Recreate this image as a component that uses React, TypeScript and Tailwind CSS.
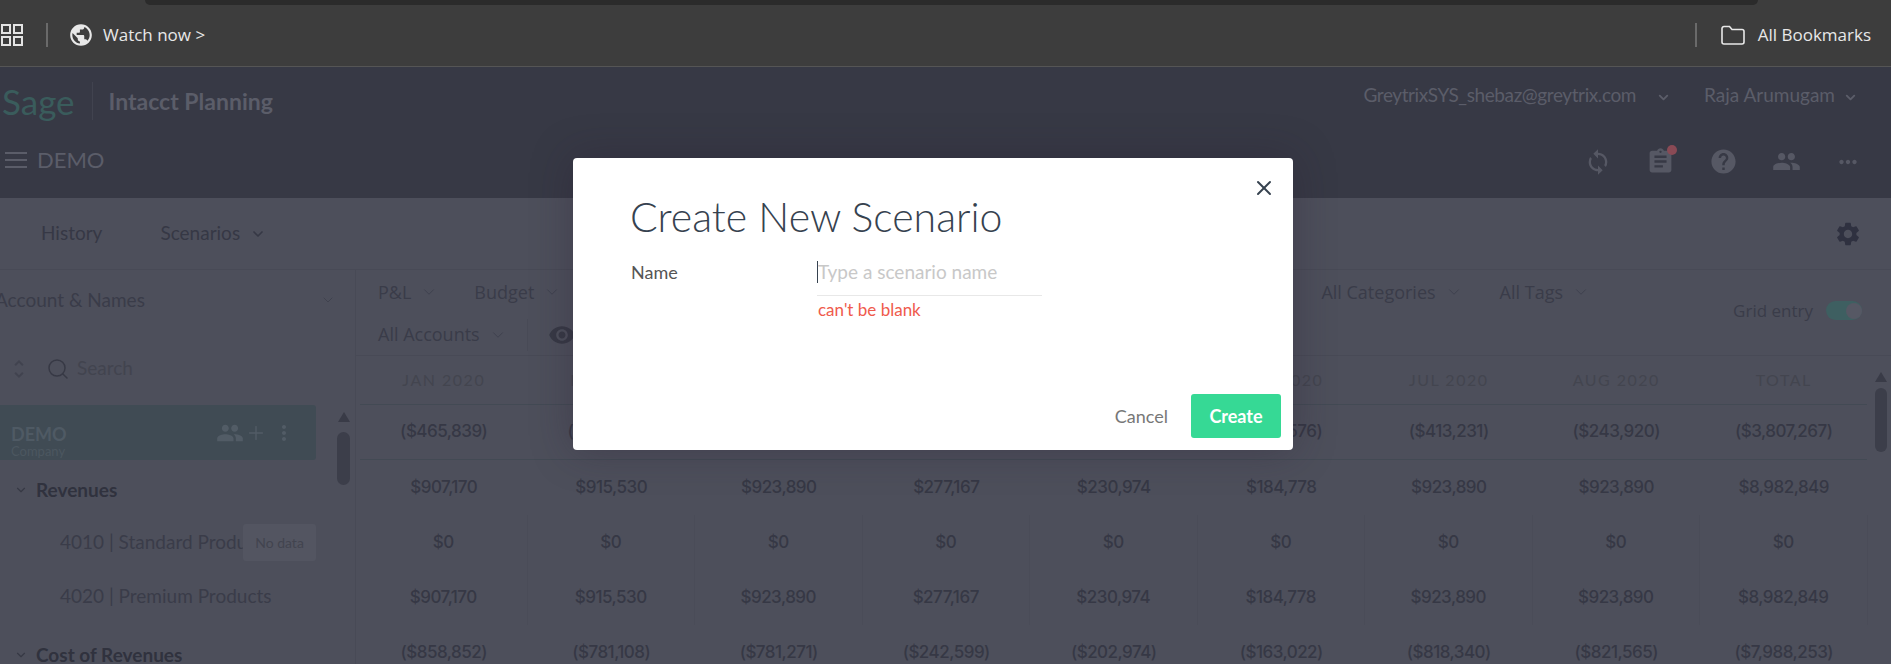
import { ChevronDown, Plus, Search, X } from "lucide-react";
import {
  MdAssignment,
  MdHelp,
  MdMoreHoriz,
  MdMoreVert,
  MdPeople,
  MdPublic,
  MdSettings,
  MdSync,
  MdUnfoldMore,
  MdVisibility,
} from "react-icons/md";

const months = ["JAN 2020", "FEB 2020", "MAR 2020", "APR 2020", "MAY 2020", "JUN 2020", "JUL 2020", "AUG 2020", "TOTAL"];

const revenue = ["$907,170", "$915,530", "$923,890", "$277,167", "$230,974", "$184,778", "$923,890", "$923,890", "$8,982,849"];

const rows = [
  { lined: true, cells: ["($465,839)", "($465,839)", "($465,839)", "($139,576)", "($139,576)", "($139,576)", "($413,231)", "($243,920)", "($3,807,267)"] },
  { lined: false, cells: revenue },
  { lined: false, grid: true, cells: ["$0", "$0", "$0", "$0", "$0", "$0", "$0", "$0", "$0"] },
  { lined: false, grid: true, cells: revenue },
  { lined: false, cells: ["($858,852)", "($781,108)", "($781,271)", "($242,599)", "($202,974)", "($163,022)", "($818,340)", "($821,565)", "($7,988,253)"] },
];

const Filter = ({ label }: { label: string }) => (
  <div className="flex items-center gap-[9px] text-[18px] text-[#3a3c49]">
    {label}
    <ChevronDown size={18} strokeWidth={1} className="text-[#3a3c49]" />
  </div>
);

const ChromeBar = () => (
  <div className="relative h-[67px] shrink-0 border-b border-[#555555] bg-[#3d3d3d] font-['Open_Sans',sans-serif] text-[#e8e8e8]">
    <div className="absolute left-[145px] top-0 h-[5px] w-[1613px] rounded-b-[10px] bg-[#2b2b2b]" />
    <div className="flex h-full items-center pt-[4px]">
      <svg width="22" height="22" viewBox="0 0 22 22" fill="none" stroke="#e4e4e4" strokeWidth="2" className="ml-px">
        <rect x="1" y="1" width="8" height="8" />
        <rect x="13" y="1" width="8" height="8" />
        <rect x="1" y="13" width="8" height="8" />
        <rect x="13" y="13" width="8" height="8" />
      </svg>
      <div className="ml-[23px] h-[24px] w-[2px] bg-[#6a6a6a]" />
      <MdPublic size={26} className="ml-[20px]" />
      <span className="ml-[9px] text-[17px]">Watch now &gt;</span>
      <div className="ml-auto h-[24px] w-[2px] bg-[#6a6a6a]" />
      <svg width="24" height="20" viewBox="0 0 24 20" fill="none" stroke="#e8e8e8" strokeWidth="1.6" className="ml-[24px]">
        <path d="M1 3.5 a2 2 0 0 1 2-2 h5.5 l2.5 3 h10 a2 2 0 0 1 2 2 v10.5 a2 2 0 0 1-2 2 h-18 a2 2 0 0 1-2-2 z" />
      </svg>
      <span className="ml-[13px] mr-[20px] text-[17px]">All Bookmarks</span>
    </div>
  </div>
);

const Header = () => (
  <div className="flex h-[131px] shrink-0 flex-col bg-[#373945] text-[#5b5d69]">
    <div className="flex h-[64px] items-center pt-[4px]">
      <span className="ml-[2px] font-['Lato',sans-serif] text-[35px] leading-none text-[#3a5c5c]">Sage</span>
      <div className="ml-[17px] h-[38px] w-px bg-[#41434f]" />
      <span className="ml-[16px] text-[23px] font-bold">Intacct Planning</span>
      <span className="ml-auto -mt-[12px] text-[19px] tracking-[-0.4px]">GreytrixSYS_shebaz@greytrix.com</span>
      <ChevronDown size={15} strokeWidth={3} className="-mt-[8px] ml-[20px]" />
      <span className="ml-[33px] -mt-[12px] text-[19px]">Raja Arumugam</span>
      <ChevronDown size={15} strokeWidth={3} className="-mt-[8px] ml-[8px] mr-[33px]" />
    </div>
    <div className="flex flex-1 items-center pb-[10px]">
      <div className="ml-[5px] flex w-[22px] flex-col gap-[5px]">
        <div className="h-[2px] bg-[#5b5d69]" />
        <div className="h-[2px] bg-[#5b5d69]" />
        <div className="h-[2px] bg-[#5b5d69]" />
      </div>
      <span className="ml-[10px] text-[22px]">DEMO</span>
      <div className="ml-auto flex items-center gap-[34px] pr-[30px] pt-[4px] text-[#565864]">
        <MdSync size={28} />
        <div className="relative">
          <MdAssignment size={29} />
          <div className="absolute -right-[2px] -top-[2px] h-[10px] w-[10px] rounded-full bg-[#8a4a55]" />
        </div>
        <MdHelp size={29} />
        <MdPeople size={29} />
        <MdMoreHoriz size={26} />
      </div>
    </div>
  </div>
);

const Toolbar = () => (
  <div className="flex h-[72px] shrink-0 items-center border-b border-[#484a56] text-[19px] text-[#363845]">
    <span className="ml-[41px]">History</span>
    <span className="ml-[58px]">Scenarios</span>
    <ChevronDown size={16} strokeWidth={2.5} className="ml-[10px]" />
    <MdSettings size={28} className="ml-auto mr-[29px] text-[#2f3140]" />
  </div>
);

const Sidebar = () => (
  <div className="relative flex w-[356px] shrink-0 flex-col border-r border-[#484a56] text-[19px] text-[#3a3c49]">
    <div className="flex h-[68px] shrink-0 items-center pb-[8px]">
      <span className="-ml-[5px]">Account &amp; Names</span>
      <ChevronDown size={16} strokeWidth={1} className="ml-auto mr-[19px]" />
    </div>
    <div className="flex h-[67px] shrink-0 items-center pb-[6px]">
      <MdUnfoldMore size={24} className="ml-[7px] text-[#41434f]" />
      <Search size={24} strokeWidth={1.5} className="ml-[15px] text-[#373945]" />
      <span className="ml-[7px] text-[#42444f]">Search</span>
    </div>
    <div className="flex h-[55px] w-[316px] shrink-0 items-center rounded-r-[3px] bg-[#404b54]">
      <div className="ml-[11px] flex flex-col pt-[16px]">
        <span className="text-[18px] font-bold leading-[20px] text-[#4f5a64]">DEMO</span>
        <span className="text-[13px] leading-[14px] text-[#4c5760]">Company</span>
      </div>
      <MdPeople size={28} className="ml-auto text-[#525c66]" />
      <Plus size={22} strokeWidth={1.5} className="ml-[1px] text-[#525c66]" />
      <MdMoreVert size={24} className="ml-[5px] mr-[20px] text-[#525c66]" />
    </div>
    <div className="flex h-[60px] shrink-0 items-center">
      <ChevronDown size={14} strokeWidth={2} className="ml-[14px] text-[#373945]" />
      <span className="ml-[8px] font-bold text-[#30323e]">Revenues</span>
    </div>
    <div className="flex h-[44px] shrink-0 items-center">
      <span className="ml-[60px] w-[183px] overflow-hidden whitespace-nowrap">4010 | Standard Products</span>
      <div className="flex h-[37px] w-[73px] items-center justify-center rounded-[3px] bg-[#535561] text-[14px] text-[#42444f]">No data</div>
    </div>
    <div className="flex h-[64px] shrink-0 items-center">
      <span className="ml-[60px]">4020 | Premium Products</span>
    </div>
    <div className="flex h-[54px] shrink-0 items-center">
      <ChevronDown size={14} strokeWidth={2} className="ml-[14px] text-[#373945]" />
      <span className="ml-[8px] font-bold text-[#30323e]">Cost of Revenues</span>
    </div>

    {/* tree scrollbar */}
    <div className="absolute left-[337px] top-[142px] flex w-[13px] flex-col items-center gap-[10px]">
      <div className="h-0 w-0 border-x-[6px] border-b-[10px] border-x-transparent border-b-[#393b47]" />
      <div className="h-[53px] w-[13px] rounded-full bg-[#3c3e4a]" />
    </div>
  </div>
);

const Table = () => (
  <div className="relative flex-1">
    <div className="h-[86px] border-b border-[#484a56] font-['Open_Sans',sans-serif]">
      <div className="flex h-[44px] items-center pl-[22px]">
        <Filter label="P&L" />
        <div className="w-[36px]" />
        <Filter label="Budget" />
        <div className="ml-auto flex items-center gap-[37px] pr-[301px]">
          <Filter label="All Categories" />
          <Filter label="All Tags" />
        </div>
      </div>
      <div className="flex h-[41px] items-center pl-[22px]">
        <Filter label="All Accounts" />
        <div className="ml-[20px] h-[32px] w-px bg-[#484a56]" />
        <MdVisibility size={28} className="ml-[20px] text-[#373945]" />
        <span className="-mt-[48px] ml-auto text-[17px] text-[#3a3c49]">Grid entry</span>
        <div className="-mt-[48px] ml-[13px] mr-[29px] flex h-[19px] w-[36px] items-center justify-end rounded-full bg-[#3e5f61]">
          <div className="h-[16px] w-[16px] rounded-full bg-[#565864]" />
        </div>
      </div>
    </div>

    <div className="ml-[4px] grid h-[49px] w-[1507px] grid-cols-[repeat(9,167.5px)] items-center border-b border-[#434a54] text-[16px] tracking-[1.5px] text-[#43454f]">
      {months.map((month) => (
        <div key={month} className="text-center">
          {month}
        </div>
      ))}
    </div>

    {rows.map((row, i) => (
      <div
        key={i}
        className={`ml-[4px] grid h-[55px] w-[1507px] grid-cols-[repeat(9,167.5px)] items-center font-['Inter',sans-serif] text-[17px] font-medium tracking-[-0.5px] text-[#363845] ${
          row.lined ? "border-b border-[#434a54]" : ""
        }`}
      >
        {row.cells.map((cell, j) => (
          <div key={j} className={`flex h-full items-center justify-center ${row.grid ? "border-r border-[#4a4c58]" : ""}`}>
            {cell}
          </div>
        ))}
      </div>
    ))}

    {/* table scrollbar */}
    <div className="absolute left-[1518px] top-[102px] flex w-[13px] flex-col items-center gap-[6px]">
      <div className="h-0 w-0 border-x-[6px] border-b-[10px] border-x-transparent border-b-[#393b47]" />
      <div className="h-[64px] w-[12px] rounded-full bg-[#3c3e4a]" />
    </div>
  </div>
);

const Modal = () => (
  <div className="absolute left-[573px] top-[158px] flex h-[292px] w-[720px] flex-col rounded-[4px] bg-white shadow-[0_0_40px_rgba(40,30,50,0.35)]">
    <button className="absolute right-[17px] top-[18px] text-[#36424f]">
      <X size={24} strokeWidth={2} />
    </button>
    <h1 className="ml-[57px] mt-[33px] font-['Lato',sans-serif] text-[41px] font-light leading-[52px] text-[#36424f]">Create New Scenario</h1>
    <div className="ml-[58px] mt-[10px] flex">
      <label className="w-[186px] pt-[7px] text-[18px] leading-[24px] text-[#555555]">Name</label>
      <div className="flex flex-col">
        <div className="flex h-[43px] w-[225px] items-start border-b border-[#e8e8e8] pt-[8px]">
          <div className="h-[22px] w-px bg-[#36424f]" />
          <span className="text-[19px] leading-[22px] text-[#c8c8c8]">Type a scenario name</span>
        </div>
        <span className="mt-[4px] pl-px text-[17px] leading-[20px] text-[#ef5a4c]">can't be blank</span>
      </div>
    </div>
    <div className="mb-[12px] mr-[12px] mt-auto flex items-center justify-end gap-[23px]">
      <span className="text-[18px] text-[#777777]">Cancel</span>
      <button className="h-[44px] w-[90px] rounded-[3px] bg-[#36d995] text-[18px] font-bold text-white">Create</button>
    </div>
  </div>
);

export default function App() {
  return (
    <div className="relative flex h-[664px] w-[1891px] flex-col overflow-hidden bg-[#4d4f5b] font-['Lato',sans-serif]">
      <ChromeBar />
      <Header />
      <Toolbar />
      <div className="flex min-h-0 flex-1">
        <Sidebar />
        <Table />
      </div>
      <Modal />
    </div>
  );
}
